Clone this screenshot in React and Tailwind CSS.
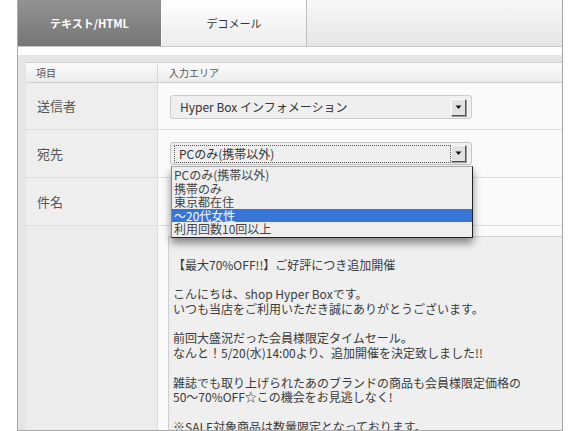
import React from "react";

function Arrow() {
  return (
    <div className="w-[15px] h-[17px] bg-[#e2e2e2] border border-t-white border-l-white border-r-[#555] border-b-[#555] flex items-center justify-center shadow-[1px_1px_0_#999]">
      <svg width="7" height="5" viewBox="0 0 7 5">
        <path d="M0.5 0.5 H6.5 L3.5 4 Z" fill="#111" />
      </svg>
    </div>
  );
}

const items = ["PCのみ(携帯以外)", "携帯のみ", "東京都在住", "〜20代女性", "利用回数10回以上"];

const body = [
  "【最大70%OFF!!】ご好評につき追加開催",
  "",
  "こんにちは、shop Hyper Boxです。",
  "いつも当店をご利用いただき誠にありがとうございます。",
  "",
  "前回大盛況だった会員様限定タイムセール。",
  "なんと！5/20(水)14:00より、追加開催を決定致しました!!",
  "",
  "雑誌でも取り上げられたあのブランドの商品も会員様限定価格の",
  "50〜70%OFF☆この機会をお見逃しなく!",
  "",
  "※SALE対象商品は数量限定となっております。",
];

export default function App() {
  return (
    <div className="w-[580px] h-[431px] bg-white overflow-hidden font-['Noto_Sans_CJK_JP',sans-serif]">
      <div className="ml-[17px] w-[546px] h-[431px] border-x border-b border-[#a9a9a9] flex flex-col">
        {/* tabs */}
        <div className="flex h-[47px] border-b border-[#c9c9c9] shrink-0">
          <div className="w-[143px] bg-gradient-to-b from-[#929292] to-[#767676] flex items-center justify-center text-white text-[11px] font-bold">
            テキスト/HTML
          </div>
          <div className="w-[146px] bg-gradient-to-b from-white to-[#ebebeb] border-l border-l-white border-r border-r-[#bdbdbd] flex items-center justify-center text-[#333] text-[11px]">
            デコメール
          </div>
          <div className="flex-1 bg-gradient-to-b from-[#f8f8f8] to-[#e5e5e5]" />
        </div>
        <div className="h-[8px] bg-white shrink-0" />
        {/* panel */}
        <div className="flex-1 bg-[#e5e5e5] pt-[7px] pl-[8px] flex flex-col min-h-0">
          <div className="flex-1 flex flex-col bg-[#fafafa] min-h-0">
            {/* header */}
            <div className="flex h-[21px] border-y border-[#cfcfcf] bg-gradient-to-b from-[#fbfbfb] to-[#ececec] text-[10px] text-[#555] shrink-0">
              <div className="w-[132px] border-r border-[#d6d6d6] pl-[10px] flex items-center">項目</div>
              <div className="flex-1 pl-[11px] flex items-center">入力エリア</div>
            </div>
            {/* sender */}
            <div className="flex h-[47px] border-b border-[#dedede] shrink-0">
              <div className="w-[132px] bg-[#eeeeee] border-r border-[#dcdcdc] pl-[11px] flex items-center text-[13px] text-[#555]">送信者</div>
              <div className="flex-1 pl-[12px] pt-[12px]">
                <div className="w-[302px] h-[24px] rounded-[3px] border border-[#cccccc] bg-[#efefef] flex items-center justify-between pl-[9px] pr-[5px] text-[12px] text-[#333]">
                  <span>Hyper Box インフォメーション</span>
                  <Arrow />
                </div>
              </div>
            </div>
            {/* dest */}
            <div className="flex h-[48px] border-b border-[#dedede] shrink-0">
              <div className="w-[132px] bg-[#eeeeee] border-r border-[#dcdcdc] pl-[11px] flex items-center text-[13px] text-[#555]">宛先</div>
              <div className="flex-1 pl-[12px] pt-[12px] relative">
                <div className="w-[302px] h-[23px] rounded-[3px] border border-[#c4c4c4] bg-[#efefef] flex items-center pl-[3px] pr-[5px] text-[12px] text-[#333]">
                  <div className="flex-1 h-[18px] border border-dotted border-[#555] flex items-center pl-[4px] leading-none">PCのみ(携帯以外)</div>
                  <Arrow />
                </div>
                <div className="absolute left-[13px] top-[36px] w-[302px] bg-[#eeeeee] border border-t-[#aaa] border-l-[#888] border-r-[#222] border-b-[#222] shadow-[0_5px_8px_rgba(0,0,0,0.45)] text-[12px] text-[#444] z-10 py-[1px]">
                  {items.map((t, i) => (
                    <div
                      key={t}
                      className={
                        i === 3
                          ? "h-[13.6px] leading-[13.6px] pl-[2px] bg-[#3875d7] text-white"
                          : "h-[13.6px] leading-[13.6px] pl-[2px]"
                      }
                    >
                      {t}
                    </div>
                  ))}
                </div>
              </div>
            </div>
            {/* subject */}
            <div className="flex h-[48px] border-b border-[#dedede] shrink-0">
              <div className="w-[132px] bg-[#eeeeee] border-r border-[#dcdcdc] pl-[11px] flex items-center text-[13px] text-[#555]">件名</div>
              <div className="flex-1" />
            </div>
            {/* body */}
            <div className="flex flex-1 min-h-0">
              <div className="w-[132px] bg-[#ececec] border-r border-[#dcdcdc]" />
              <div className="flex-1 pl-[10px] pt-[10px] flex min-h-0">
                <div className="flex-1 bg-[#efefef] border-t border-l border-[#cfcfcf] pl-[4px] pt-[21px] text-[12px] leading-[14.7px] text-[#3a3a3a] overflow-hidden">
                  {body.map((l, i) => (
                    <div key={i} className="h-[14.7px] whitespace-nowrap">{l}</div>
                  ))}
                </div>
              </div>
            </div>
          </div>
        </div>
      </div>
    </div>
  );
}
